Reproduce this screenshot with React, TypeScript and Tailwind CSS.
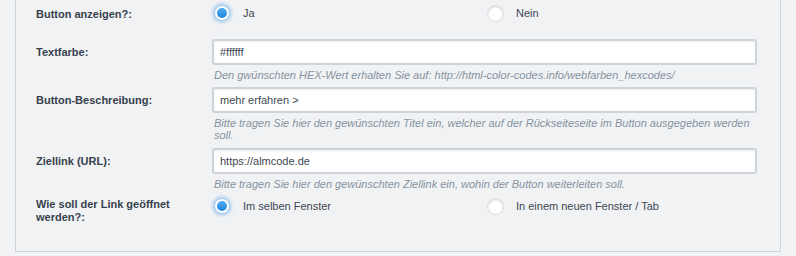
// Button settings form - radio + text fields with hints

const FONT = "font-['Liberation_Sans',Arial,sans-serif]";

// -- Radio -------------------------------------------------------------------

function Radio({ checked, label }: { checked?: boolean; label: string }): React.JSX.Element {
  return (
    <label className="flex items-center gap-[11px] text-[11px] text-[#3d4853]">
      <span className="flex h-5 w-5 items-center justify-center">
        {checked ? (
          <span className="flex h-4 w-4 items-center justify-center rounded-full border border-[#9ccbf0] bg-white shadow-[0_0_3px_2px_rgba(110,175,235,0.45)]">
            <span className="h-[10px] w-[10px] rounded-full bg-gradient-to-b from-[#4eaaf2] to-[#1f86dc]" />
          </span>
        ) : (
          <span className="h-[17px] w-[17px] rounded-full border border-[#d9dde1] bg-white shadow-[inset_0_1px_2px_rgba(0,0,0,0.18)]" />
        )}
      </span>
      <span>{label}</span>
    </label>
  );
}

function RadioGroup({ options, selected }: { options: string[]; selected: number }): React.JSX.Element {
  return (
    <div className="grid grid-cols-[273px_1fr]">
      {options.map((o, i) => (
        <Radio key={o} label={o} checked={i === selected} />
      ))}
    </div>
  );
}

// -- Text field --------------------------------------------------------------

function Field({ label, value, hint, className = '' }: {
  label: string; value: string; hint: string; className?: string;
}): React.JSX.Element {
  return (
    <div className={`grid grid-cols-[176px_545px] ${className}`}>
      <div className="flex items-center text-[11px] font-bold text-[#36414c]">{label}</div>
      <div className="flex h-[26px] items-center rounded-[3px] border-2 border-[#cdd3d9] bg-white px-[6px] text-[11px] text-[#3d4853] shadow-[inset_0_1px_2px_rgba(0,0,0,0.08)]">
        {value}
      </div>
      <div />
      <p className="mt-[4px] pl-[2px] pr-[6px] text-[11px] italic leading-[12px] text-[#8592a0]">{hint}</p>
    </div>
  );
}

// -- Main --------------------------------------------------------------------

export default function App(): React.JSX.Element {
  return (
    <div className={`h-[256px] w-[796px] overflow-hidden bg-[#f1f2f4] ${FONT}`}>
      <div className="ml-[15px] w-[766px] border-x border-b border-[#d0d3d7] pb-[27px] pl-[20px]">
        <div className="grid h-[26px] grid-cols-[176px_545px] items-center">
          <div className="text-[11px] font-bold text-[#36414c] translate-y-[1px]">Button anzeigen?:</div>
          <RadioGroup options={['Ja', 'Nein']} selected={0} />
        </div>

        <Field
          className="mt-[13px]"
          label="Textfarbe:"
          value="#ffffff"
          hint="Den gwünschten HEX-Wert erhalten Sie auf: http://html-color-codes.info/webfarben_hexcodes/"
        />
        <Field
          className="mt-[6px]"
          label="Button-Beschreibung:"
          value="mehr erfahren >"
          hint="Bitte tragen Sie hier den gewünschten Titel ein, welcher auf der Rückseiteseite im Button ausgegeben werden soll."
        />
        <Field
          className="mt-[7px]"
          label="Ziellink (URL):"
          value="https://almcode.de"
          hint="Bitte tragen Sie hier den gewünschten Ziellink ein, wohin der Button weiterleiten soll."
        />

        <div className="mt-[8px] grid grid-cols-[176px_545px] items-start">
          <div className="text-[11px] font-bold leading-[13px] text-[#36414c]">
            Wie soll der Link geöffnet<br />werden?:
          </div>
          <div className="-mt-[2px]">
            <RadioGroup options={['Im selben Fenster', 'In einem neuen Fenster / Tab']} selected={0} />
          </div>
        </div>
      </div>
    </div>
  );
}
